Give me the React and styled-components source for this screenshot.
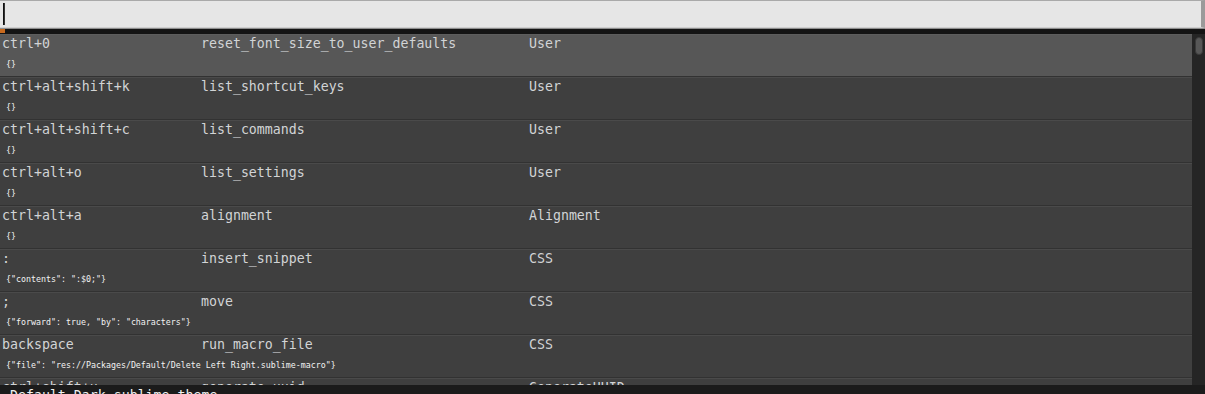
import React from "react";
import styled, { createGlobalStyle } from "styled-components";

const Global = createGlobalStyle`
  html, body { margin: 0; padding: 0; background: #1b1b1b; }
  body { font-family: "DejaVu Sans Mono", "Liberation Mono", monospace; }
`;

const Page = styled.div`
  width: 1205px;
  height: 394px;
  display: flex;
  flex-direction: column;
  overflow: hidden;
  background: #1b1b1b;
`;

const SearchBar = styled.div`
  height: 26px;
  display: flex;
  align-items: center;
  background: #e6e6e6;
  border-top: 1px solid #a9a9a9;
  border-bottom: 1px solid #cfcfcf;
  border-right: 4px solid #9a9a9a;
  padding-left: 3px;
`;

const Caret = styled.span`
  width: 1px;
  height: 22px;
  background: #111;
  border-right: 1px solid #333;
`;

const Divider = styled.div`
  height: 5px;
  background: #141414;
  border-top: 1px solid #8d8d8d;
  display: flex;
`;

const Marker = styled.span`
  width: 5px;
  height: 4px;
  background: #c96a1e;
`;

const Body = styled.div`
  flex: 1;
  display: flex;
  min-height: 0;
`;

const List = styled.div`
  flex: 1;
  overflow: hidden;
  display: flex;
  flex-direction: column;
`;

const Row = styled.div`
  flex: none;
  height: 41px;
  border-top: 1px solid ${(p) => (p.$selected ? "#5d5d5d" : "#4a4a4a")};
  border-bottom: 1px solid #323232;
  background: ${(p) => (p.$selected ? "#575757" : "#3f3f3f")};
  display: flex;
  flex-direction: column;
  gap: 2px;
  padding-left: 2px;
`;

const Main = styled.div`
  height: 17px;
  display: grid;
  grid-template-columns: 199px 328px 1fr;
  align-items: center;
  font-size: 13.25px;
  color: #d2d4d6;
  white-space: nowrap;
`;

const Args = styled.div`
  height: 20px;
  display: flex;
  align-items: center;
  padding-left: 4px;
  font-size: 8.3px;
  color: #f2f2f2;
  white-space: nowrap;
`;

const Scroll = styled.div`
  width: 13px;
  background: #252525;
  display: flex;
  justify-content: center;
  padding-top: 3px;
`;

const Thumb = styled.div`
  width: 6px;
  height: 16px;
  border-radius: 4px;
  background: #575757;
  border: 1px solid #3a3a3a;
`;

const Footer = styled.div`
  height: 9px;
  background: #1b1b1b;
  overflow: hidden;
  position: relative;
`;

const FooterText = styled.span`
  position: absolute;
  left: 10px;
  top: 3px;
  font-size: 13.25px;
  line-height: 15px;
  color: #f0f0f0;
  white-space: nowrap;
`;

const rows = [
  ["ctrl+0", "reset_font_size_to_user_defaults", "User", "{}"],
  ["ctrl+alt+shift+k", "list_shortcut_keys", "User", "{}"],
  ["ctrl+alt+shift+c", "list_commands", "User", "{}"],
  ["ctrl+alt+o", "list_settings", "User", "{}"],
  ["ctrl+alt+a", "alignment", "Alignment", "{}"],
  [":", "insert_snippet", "CSS", '{"contents": ":$0;"}'],
  [";", "move", "CSS", '{"forward": true, "by": "characters"}'],
  ["backspace", "run_macro_file", "CSS", '{"file": "res://Packages/Default/Delete Left Right.sublime-macro"}'],
  ["ctrl+shift+u", "generate_uuid", "GenerateUUID", "{}"],
];

export default function App() {
  return (
    <Page>
      <Global />
      <SearchBar>
        <Caret />
      </SearchBar>
      <Divider>
        <Marker />
      </Divider>
      <Body>
        <List>
          {rows.map(([key, cmd, src, args], i) => (
            <Row key={i} $selected={i === 0}>
              <Main>
                <span>{key}</span>
                <span>{cmd}</span>
                <span>{src}</span>
              </Main>
              <Args>{args}</Args>
            </Row>
          ))}
        </List>
        <Scroll>
          <Thumb />
        </Scroll>
      </Body>
      <Footer>
        <FooterText>Default Dark.sublime-theme</FooterText>
      </Footer>
    </Page>
  );
}
